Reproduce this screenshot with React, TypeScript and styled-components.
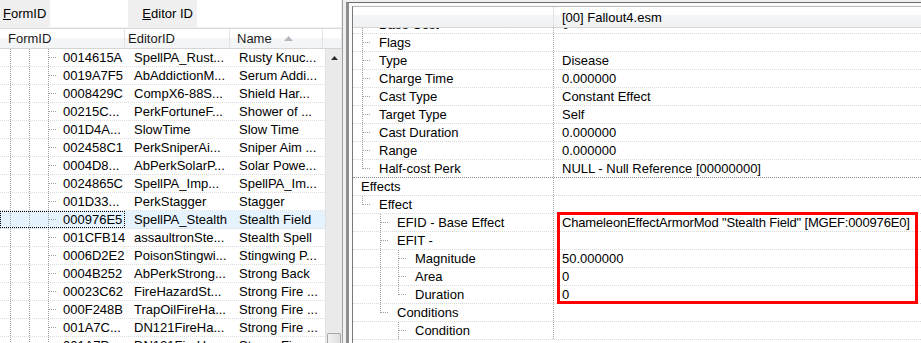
import React from 'react';
import styled, {createGlobalStyle} from 'styled-components';

const GlobalStyle = createGlobalStyle`
  html, body {
    margin: 0;
    padding: 0;
    background: #f0f0f0;
    overflow: hidden;
  }
  body {
    font-family: 'Liberation Sans', Arial, sans-serif;
    font-size: 13px;
    color: #000;
  }
`;

type Guide = 'pipe' | 'tee' | 'elbow' | 'blank';

const Window = styled.div`
  display: flex;
  width: 921px;
  height: 343px;
  overflow: hidden;
  background: #f0f0f0;
`;

/* ---------- left: record list ---------- */

const LeftPane = styled.div`
  width: 343px;
  flex: none;
  display: flex;
  flex-direction: column;
  border-right: 1px solid #a0a0a0;
  box-sizing: border-box;
`;

const FilterBar = styled.div`
  height: 28px;
  flex: none;
  display: flex;
  align-items: flex-start;
`;

const FilterLabel = styled.div<{$gap: number}>`
  flex: none;
  margin-left: ${({$gap}) => $gap}px;
  line-height: 28px;
  height: 28px;
  white-space: nowrap;

  u {
    text-decoration: underline;
  }
`;

const FilterField = styled.div<{$w: number; $gap: number}>`
  flex: none;
  width: ${({$w}) => $w}px;
  margin-left: ${({$gap}) => $gap}px;
  height: 27px;
  background: #ffffff;
`;

const ListHeader = styled.div`
  height: 21px;
  flex: none;
  display: grid;
  grid-template-columns: 125px 105px 93px 1fr;
  box-sizing: border-box;
  border-top: 1px solid #d6dbe0;
  border-bottom: 1px solid #d5d5d5;
  background: linear-gradient(#ffffff 0%, #ffffff 45%, #f5f6f7 45%, #f3f4f6 100%);
`;

const HeaderCell = styled.div<{$pad?: number}>`
  display: flex;
  align-items: center;
  gap: 12px;
  padding-left: ${({$pad}) => $pad ?? 8}px;
  border-right: 1px solid #e1e4e8;
  white-space: nowrap;
  overflow: hidden;
  color: #1b1b1b;
`;

const ListBody = styled.div`
  flex: 1;
  display: flex;
  min-height: 0;
  background: #fff;
`;

const Rows = styled.div`
  width: 325px;
  flex: none;
  overflow: hidden;
`;

const ListRow = styled.div<{$selected?: boolean}>`
  height: 18px;
  box-sizing: border-box;
  display: grid;
  grid-template-columns: 125px 105px 95px;
  border-bottom: 1px dotted #dcdcdc;
  background: ${({$selected}) => ($selected ? '#e5f3ff' : '#fff')};
`;

const ListCell = styled.div<{$focus?: boolean; $pad?: number}>`
  display: flex;
  align-items: center;
  overflow: hidden;
  white-space: nowrap;
  padding-left: ${({$pad}) => $pad ?? 0}px;
  line-height: 17px;
  outline: ${({$focus}) => ($focus ? '1px dotted #000' : 'none')};
  outline-offset: -1px;

  span {
    padding-left: 6px;
  }
`;

const ScrollBar = styled.div`
  width: 17px;
  flex: none;
  display: flex;
  flex-direction: column;
  background: #eaeaea;
  border-left: 1px solid #e3e3e3;
  box-sizing: border-box;
`;

const ScrollButton = styled.div`
  height: 17px;
  display: flex;
  align-items: center;
  justify-content: center;
`;

const ScrollTrack = styled.div`
  flex: 1;
`;

const ScrollThumb = styled.div`
  height: 9px;
  margin: 0 1px;
  border: 1px solid #a7a7a7;
  border-bottom: none;
  border-radius: 2px 2px 0 0;
  background: linear-gradient(90deg, #f2f2f2, #dedede);
`;

const Splitter = styled.div`
  width: 3px;
  flex: none;
`;

/* ---------- right: record view ---------- */

const RightPane = styled.div`
  flex: 1;
  margin-top: 2px;
  display: flex;
  border-left: 3px solid #8e8e8e;
  border-top: 1px solid #6c6c6c;
  padding: 3px 0 0 3px;
  background: #fbfbfb;
  min-width: 0;
`;

const ViewFrame = styled.div`
  flex: 1;
  display: flex;
  flex-direction: column;
  border-left: 1px solid #7a7a7a;
  border-top: 1px solid #b9b9b9;
  background: #fff;
  min-width: 0;
  overflow: hidden;
`;

const ViewHeader = styled.div`
  height: 21px;
  flex: none;
  display: grid;
  grid-template-columns: 200px 1fr;
  box-sizing: border-box;
  border-bottom: 1px solid #d5d5d5;
  background: linear-gradient(#ffffff 0%, #ffffff 42%, #f4f5f7 42%, #f1f2f4 100%);

  div + div {
    border-left: 1px solid #e3e3e3;
    padding-left: 8px;
    display: flex;
    align-items: center;
    white-space: nowrap;
  }
`;

const ViewBody = styled.div`
  flex: 1;
  overflow: hidden;
`;

const FieldList = styled.div`
  position: relative;
  margin-top: -12px;
`;

const FieldRow = styled.div<{$strong?: boolean}>`
  height: 18px;
  box-sizing: border-box;
  display: grid;
  grid-template-columns: 200px 1fr;
  border-bottom: 1px dotted ${({$strong}) => ($strong ? '#8c8c8c' : '#d9d9d9')};
`;

const FieldName = styled.div`
  display: flex;
  align-items: center;
  white-space: nowrap;
  overflow: hidden;
  line-height: 17px;

  span {
    padding-left: 8px;
  }
`;

const FieldValue = styled.div<{$tight?: boolean}>`
  border-left: 1px dotted #a6a6a6;
  padding-left: 8px;
  line-height: 17px;
  white-space: nowrap;
  overflow: hidden;
  letter-spacing: ${({$tight}) => ($tight ? '-0.16px' : 'normal')};
`;

const Highlight = styled.div`
  position: absolute;
  left: 204px;
  top: 196px;
  width: 361px;
  height: 92px;
  box-sizing: border-box;
  border: 3px solid #ff0000;
  pointer-events: none;
`;

/* ---------- drawings ---------- */

const TreeGuide = ({kind, width}: {kind: Guide; width: number}) => {
  const x = width === 19 ? 10.5 : 9.5;
  const dash = '1 1';
  const stroke = '#a0a0a0';
  return (
    <svg width={width} height={17} style={{flex: 'none', display: 'block'}} shapeRendering="crispEdges">
      {(kind === 'pipe' || kind === 'tee') && (
        <line x1={x} y1={0} x2={x} y2={17} stroke={stroke} strokeDasharray={dash} />
      )}
      {kind === 'elbow' && <line x1={x} y1={0} x2={x} y2={9} stroke={stroke} strokeDasharray={dash} />}
      {(kind === 'tee' || kind === 'elbow') && (
        <line x1={x + 0.5} y1={8.5} x2={width} y2={8.5} stroke={stroke} strokeDasharray={dash} />
      )}
    </svg>
  );
};

const SortArrow = () => (
  <svg width="9" height="5" viewBox="0 0 9 5">
    <path d="M4.5 0 L9 5 L0 5 Z" fill="#b4b9c0" />
  </svg>
);

const UpArrow = () => (
  <svg width="7" height="4" viewBox="0 0 7 4">
    <path d="M3.5 0 L7 4 L0 4 Z" fill="#2b2b2b" />
  </svg>
);

/* ---------- data ---------- */

const records = [
  ['0014615A', 'SpellPA_Rust...', 'Rusty Knuc...'],
  ['0019A7F5', 'AbAddictionM...', 'Serum Addi...'],
  ['0008429C', 'CompX6-88S...', 'Shield Har...'],
  ['00215C...', 'PerkFortuneF...', 'Shower of ...'],
  ['001D4A...', 'SlowTime', 'Slow Time'],
  ['002458C1', 'PerkSniperAi...', 'Sniper Aim ...'],
  ['0004D8...', 'AbPerkSolarP...', 'Solar Powe...'],
  ['0024865C', 'SpellPA_Imp...', 'SpellPA_Im...'],
  ['001D33...', 'PerkStagger', 'Stagger'],
  ['000976E5', 'SpellPA_Stealth', 'Stealth Field'],
  ['001CFB14', 'assaultronSte...', 'Stealth Spell'],
  ['0006D2E2', 'PoisonStingwi...', 'Stingwing P...'],
  ['0004B252', 'AbPerkStrong...', 'Strong Back'],
  ['00023C62', 'FireHazardSt...', 'Strong Fire ...'],
  ['000F248B', 'TrapOilFireHa...', 'Strong Fire ...'],
  ['001A7C...', 'DN121FireHa...', 'Strong Fire ...'],
  ['001A7D...', 'DN121FireHa...', 'Strong Fire ...'],
];

const SELECTED = '000976E5';

type Field = {name: string; value?: string; guides: Guide[]; strong?: boolean; tight?: boolean};

const fields: Field[] = [
  {name: 'Base Cost', value: '0', guides: ['tee']},
  {name: 'Flags', guides: ['tee']},
  {name: 'Type', value: 'Disease', guides: ['tee']},
  {name: 'Charge Time', value: '0.000000', guides: ['tee']},
  {name: 'Cast Type', value: 'Constant Effect', guides: ['tee']},
  {name: 'Target Type', value: 'Self', guides: ['tee']},
  {name: 'Cast Duration', value: '0.000000', guides: ['tee']},
  {name: 'Range', value: '0.000000', guides: ['tee']},
  {name: 'Half-cost Perk', value: 'NULL - Null Reference [00000000]', guides: ['elbow'], strong: true},
  {name: 'Effects', guides: []},
  {name: 'Effect', guides: ['elbow']},
  {
    name: 'EFID - Base Effect',
    value: 'ChameleonEffectArmorMod "Stealth Field" [MGEF:000976E0]',
    guides: ['blank', 'tee'],
    tight: true,
  },
  {name: 'EFIT -', guides: ['blank', 'tee']},
  {name: 'Magnitude', value: '50.000000', guides: ['blank', 'pipe', 'tee']},
  {name: 'Area', value: '0', guides: ['blank', 'pipe', 'tee']},
  {name: 'Duration', value: '0', guides: ['blank', 'pipe', 'elbow']},
  {name: 'Conditions', guides: ['blank', 'elbow']},
  {name: 'Condition', guides: ['blank', 'blank', 'tee']},
];

const App = () => {
  return (
    <Window>
      <GlobalStyle />

      <LeftPane>
        <FilterBar>
          <FilterLabel $gap={3}>
            <u>F</u>ormID
          </FilterLabel>
          <FilterField $w={78} $gap={4} />
          <FilterLabel $gap={14}>
            <u>E</u>ditor ID
          </FilterLabel>
          <FilterField $w={144} $gap={4} />
        </FilterBar>

        <ListHeader>
          <HeaderCell $pad={8}>FormID</HeaderCell>
          <HeaderCell $pad={3}>EditorID</HeaderCell>
          <HeaderCell $pad={7}>
            Name
            <SortArrow />
          </HeaderCell>
          <HeaderCell />
        </ListHeader>

        <ListBody>
          <Rows>
            {records.map(([id, editorId, name]) => {
              const selected = id === SELECTED;
              return (
                <ListRow key={id + editorId} $selected={selected}>
                  <ListCell $focus={selected}>
                    <TreeGuide kind="pipe" width={19} />
                    <TreeGuide kind="pipe" width={19} />
                    <TreeGuide kind="tee" width={19} />
                    <span>{id}</span>
                  </ListCell>
                  <ListCell $pad={9}>{editorId}</ListCell>
                  <ListCell $pad={9}>{name}</ListCell>
                </ListRow>
              );
            })}
          </Rows>
          <ScrollBar>
            <ScrollButton>
              <UpArrow />
            </ScrollButton>
            <ScrollTrack />
            <ScrollThumb />
          </ScrollBar>
        </ListBody>
      </LeftPane>

      <Splitter />

      <RightPane>
        <ViewFrame>
          <ViewHeader>
            <div />
            <div>[00] Fallout4.esm</div>
          </ViewHeader>
          <ViewBody>
            <FieldList>
              {fields.map((f) => (
                <FieldRow key={f.name} $strong={f.strong}>
                  <FieldName>
                    {f.guides.map((g, i) => (
                      <TreeGuide key={i} kind={g} width={18} />
                    ))}
                    <span>{f.name}</span>
                  </FieldName>
                  <FieldValue $tight={f.tight}>{f.value}</FieldValue>
                </FieldRow>
              ))}
              <Highlight />
            </FieldList>
          </ViewBody>
        </ViewFrame>
      </RightPane>
    </Window>
  );
};

export default App;
